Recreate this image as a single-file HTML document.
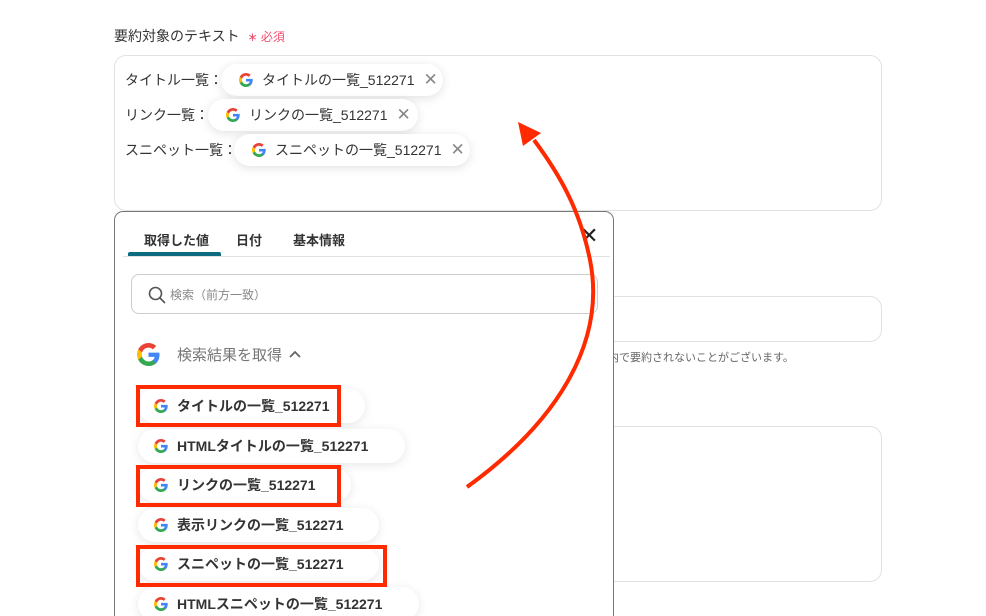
<!DOCTYPE html>
<html><head><meta charset="utf-8"><style>
*{box-sizing:border-box;margin:0;padding:0}
html,body{width:986px;height:616px;overflow:hidden}
body{background:#fff;font-family:"Liberation Sans","Noto Sans CJK JP",sans-serif;color:#333;position:relative}
.a{position:absolute}
.fld{position:absolute;border:1px solid #e2e2e2;border-radius:12px;background:#fff}
.chip{position:absolute;height:32px;border-radius:16px;background:#fff;box-shadow:0 2px 10px rgba(0,0,0,.12);display:flex;align-items:center;font-size:14px;color:#333;white-space:nowrap}
.chip svg{margin-right:9px}
.x{color:#888;font-size:17px;margin-left:9px;font-weight:300}
.lbl{position:absolute;font-size:14px;color:#333}
.it{position:absolute;left:138px;height:34px;border-radius:17px;background:#fff;box-shadow:0 2px 10px rgba(0,0,0,.10);display:flex;align-items:center;padding-left:16px;font-size:14px;font-weight:bold;color:#333;white-space:nowrap}
.it svg{margin-right:9px}
.red{position:absolute;border:4px solid #ff2a00;left:136px;height:42px}
</style></head><body>
<svg width="0" height="0" style="position:absolute"><defs><g id="g"><path fill="#4285F4" d="M23.5 12.3c0-.8-.1-1.6-.2-2.3H12v4.5h6.5c-.3 1.5-1.1 2.7-2.4 3.6v3h3.9c2.2-2.1 3.5-5.2 3.5-8.8z"/><path fill="#34A853" d="M12 24c3.2 0 6-1.1 7.9-2.9l-3.9-3c-1.1.7-2.4 1.2-4 1.2-3.1 0-5.7-2.1-6.7-4.900h-4v3.1C3.3 21.3 7.4 24 12 24z"/><path fill="#FBBC05" d="M5.3 14.3c-.2-.7-.4-1.5-.4-2.3s.1-1.6.4-2.3V6.6h-4C.5 8.2 0 10.1 0 12s.5 3.8 1.3 5.4l4-3.1z"/><path fill="#EA4335" d="M12 4.8c1.8 0 3.3.6 4.6 1.8l3.4-3.4C18 1.2 15.2 0 12 0 7.4 0 3.3 2.7 1.3 6.6l4 3.1c1-2.8 3.6-4.9 6.7-4.9z"/></g></defs></svg>

<div class="a" style="left:114px;top:26px;font-size:14px;color:#333">要約対象のテキスト <span style="color:#f0506e;font-size:12px;margin-left:4px">∗ 必須</span></div>
<div class="fld" style="left:114px;top:55px;width:768px;height:156px"></div>
<div class="lbl" style="left:125px;top:70px">タイトル一覧：</div>
<div class="chip" style="left:221px;top:64px;width:222px;padding-left:18px"><svg width="14" height="14" viewBox="0 0 24 24"><use href="#g"/></svg>タイトルの一覧_512271<span class="x">✕</span></div>
<div class="lbl" style="left:125px;top:105px">リンク一覧：</div>
<div class="chip" style="left:208px;top:99px;width:210px;padding-left:18px"><svg width="14" height="14" viewBox="0 0 24 24"><use href="#g"/></svg>リンクの一覧_512271<span class="x">✕</span></div>
<div class="lbl" style="left:125px;top:140px">スニペット一覧：</div>
<div class="chip" style="left:234px;top:134px;width:236px;padding-left:18px"><svg width="14" height="14" viewBox="0 0 24 24"><use href="#g"/></svg>スニペットの一覧_512271<span class="x">✕</span></div>

<div class="fld" style="left:560px;top:296px;width:322px;height:46px"></div>
<div class="a" style="left:597px;top:349px;font-size:11px;color:#666">す内で要約されないことがございます。</div>
<div class="fld" style="left:560px;top:426px;width:322px;height:156px"></div>

<div class="a" style="left:114px;top:211px;width:500px;height:420px;border:1px solid #777;border-radius:9px;background:#fff">
 <div class="a" style="left:29px;top:18px;font-size:13px;font-weight:bold;color:#333">取得した値</div>
 <div class="a" style="left:121px;top:18px;font-size:13px;font-weight:bold;color:#333">日付</div>
 <div class="a" style="left:178px;top:18px;font-size:13px;font-weight:bold;color:#333">基本情報</div>
 <div class="a" style="left:13px;top:40px;width:93px;height:4px;background:#0e6b80;border-radius:2px 2px 0 0"></div>
 <div class="a" style="left:8px;top:44px;width:487px;height:1px;background:#e2e2e2"></div>
 <div class="a" style="left:465px;top:11px;font-size:22px;color:#222">✕</div>
 <div class="a" style="left:16px;top:62px;width:467px;height:40px;border:1px solid #ccc;border-radius:8px">
  <svg class="a" style="left:16px;top:11px" width="18" height="18" viewBox="0 0 18 18"><circle cx="7.5" cy="7.5" r="6" fill="none" stroke="#555" stroke-width="1.6"/><path d="M12 12l5 5" stroke="#555" stroke-width="1.6"/></svg>
  <div class="a" style="left:38px;top:11px;font-size:12px;color:#888">検索（前方一致）</div>
 </div>
 <svg class="a" style="left:22px;top:131px" width="23" height="23" viewBox="0 0 24 24"><use href="#g"/></svg>
 <div class="a" style="left:62px;top:132px;font-size:15px;color:#777">検索結果を取得</div>
 <svg class="a" style="left:174px;top:138px" width="12" height="8" viewBox="0 0 12 8"><path d="M1 7l5-5 5 5" fill="none" stroke="#666" stroke-width="1.8"/></svg>
</div>

<div class="it" style="top:389px;width:227px"><svg width="14" height="14" viewBox="0 0 24 24"><use href="#g"/></svg>タイトルの一覧_512271</div>
<div class="it" style="top:429px;width:267px"><svg width="14" height="14" viewBox="0 0 24 24"><use href="#g"/></svg>HTMLタイトルの一覧_512271</div>
<div class="it" style="top:468px;width:213px"><svg width="14" height="14" viewBox="0 0 24 24"><use href="#g"/></svg>リンクの一覧_512271</div>
<div class="it" style="top:508px;width:241px"><svg width="14" height="14" viewBox="0 0 24 24"><use href="#g"/></svg>表示リンクの一覧_512271</div>
<div class="it" style="top:547px;width:241px"><svg width="14" height="14" viewBox="0 0 24 24"><use href="#g"/></svg>スニペットの一覧_512271</div>
<div class="it" style="top:587px;width:281px"><svg width="14" height="14" viewBox="0 0 24 24"><use href="#g"/></svg>HTMLスニペットの一覧_512271</div>
<div class="red" style="top:385px;width:205px"></div>
<div class="red" style="top:465px;width:205px"></div>
<div class="red" style="top:545px;width:251px"></div>

<svg class="a" style="left:0;top:0" width="986" height="616"><path d="M467,487 C560,420 606,340 590,260 C580,210 560,175 534,140" fill="none" stroke="#ff2a00" stroke-width="4"/><path d="M518,122 L541,133 L523,146 Z" fill="#ff2a00"/></svg>
</body></html>
